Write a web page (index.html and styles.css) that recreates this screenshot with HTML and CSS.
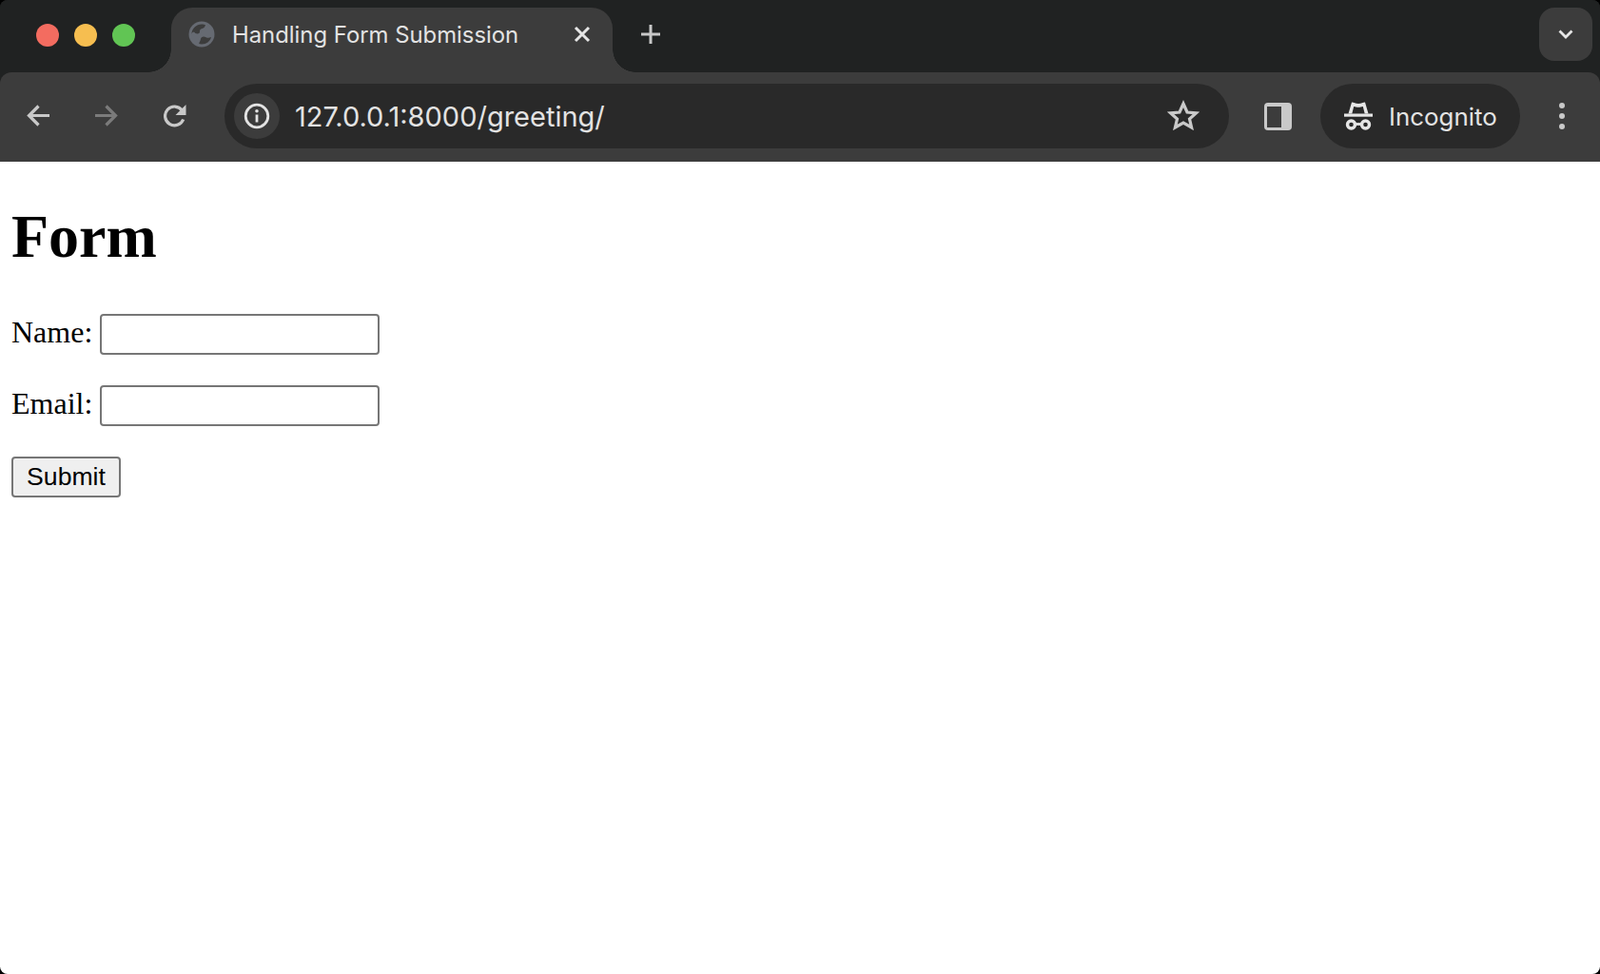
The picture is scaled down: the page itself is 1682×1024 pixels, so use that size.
FILE: index.html
```html
<!DOCTYPE html>
<html lang="en">
<head>
<meta charset="utf-8">
<title>Handling Form Submission</title>
<link rel="stylesheet" href="styles.css">
</head>
<body>
<div class="window">
  <header class="tabstrip">
    <div class="lights">
      <span class="light red"></span>
      <span class="light yellow"></span>
      <span class="light green"></span>
    </div>
    <div class="tab">
      <svg class="globe" viewBox="0 0 28 28" aria-hidden="true">
        <circle cx="14" cy="14" r="13.5" fill="#666a72"/>
        <path d="M3.5 14C3.5 8 8.5 3.500 14 3.500c1.500 0 3 .3 4 .8-.5 2-1.500 3.200-3.500 3.700-1.800.4-2.500 1.500-2.500 3 0 1.800-1 2.500-2.500 2.500-1.500 0-2.800-1-3.500-2-.8 0-2.500.8-2.500 2.500zM14 24.500c-1 0-2-.2-2.800-.5.3-2 1.600-3.200 1.800-5 .2-1.500 1.500-2.500 3.200-2.500 1.500 0 2.300 1 3.800 1.300 1 .2 3-.4 4-.8-1 4.500-5 7.500-10 7.500z" fill="#3c3c3c"/>
      </svg>
      <span class="tab-title">Handling Form Submission</span>
      <svg class="tab-close" viewBox="0 0 18 18" aria-hidden="true">
        <path d="M2 2l14 14M16 2L2 16" stroke="#e6e6e6" stroke-width="3" fill="none"/>
      </svg>
    </div>
    <svg class="new-tab" viewBox="0 0 22 22" aria-hidden="true">
      <path d="M11 1v20M1 11h20" stroke="#c8c8c8" stroke-width="3" fill="none"/>
    </svg>
    <div class="tab-search">
      <svg class="chevron" viewBox="0 0 16 10" aria-hidden="true">
        <path d="M1.500 1.500L8 8l6.500-6.500" stroke="#e6e6e6" stroke-width="2.800" fill="none"/>
      </svg>
    </div>
  </header>

  <nav class="toolbar">
    <svg class="nav-icon" viewBox="0 0 24 24" aria-hidden="true">
      <path d="M24 11.500H3M12.500 1.500L2.500 11.500l10 10" stroke="#c9c9c9" stroke-width="3.200" fill="none"/>
    </svg>
    <svg class="nav-icon" viewBox="0 0 24 24" aria-hidden="true">
      <path d="M0 11.500h21M11.500 1.500l10 10-10 10" stroke="#7b7b7b" stroke-width="3.200" fill="none"/>
    </svg>
    <svg class="nav-icon" viewBox="0 0 24 24" aria-hidden="true">
      <path d="M20.700 15.500a9.900 9.900 0 1 1-1.300-9.500" stroke="#c9c9c9" stroke-width="3.200" fill="none"/>
      <path d="M23.500 0v11h-11z" fill="#c9c9c9"/>
    </svg>
    <div class="omnibox">
      <span class="info">
        <svg class="info-icon" viewBox="0 0 28 28" aria-hidden="true">
          <circle cx="14" cy="14" r="11.800" stroke="#e3e3e3" stroke-width="2.800" fill="none"/>
          <path d="M14 12.500v8" stroke="#e3e3e3" stroke-width="2.800"/>
          <circle cx="14" cy="8.800" r="1.800" fill="#e3e3e3"/>
        </svg>
      </span>
      <span class="url">127.0.0.1:8000/greeting/</span>
      <svg class="star" viewBox="0 0 34 32" aria-hidden="true">
        <path d="M17 4l4 9 9.500.8-7 6.200 2.100 9-8.600-5-8.600 5 2.100-9-7-6.200L13 13z" stroke="#c9c9c9" stroke-width="3.200" stroke-linejoin="miter" fill="none"/>
      </svg>
    </div>
    <span class="side-panel"><span class="side-panel-left"></span></span>
    <div class="incognito">
      <svg class="hat" viewBox="0 0 30 30" aria-hidden="true">
        <path d="M0 12.500h30v3.200H0z" fill="#e6e6e6"/>
        <path d="M4.500 12.500L8 0.500c2.500 0 3.500 1.500 7 1.500s4.500-1.500 7-1.500l3.500 12h-3.800L19.800 5c-1.800.5-3 .8-4.800.8s-3-.3-4.800-.8L8.300 12.500z" fill="#e6e6e6"/>
        <circle cx="7.500" cy="24" r="4" stroke="#e6e6e6" stroke-width="3.400" fill="none"/>
        <circle cx="22.500" cy="24" r="4" stroke="#e6e6e6" stroke-width="3.400" fill="none"/>
        <path d="M11 23.500h8" stroke="#e6e6e6" stroke-width="2.800"/>
      </svg>
      <span class="incognito-label">Incognito</span>
    </div>
    <div class="menu">
      <span class="dot"></span>
      <span class="dot"></span>
      <span class="dot"></span>
    </div>
  </nav>

  <main class="page">
    <h1 class="heading">Form</h1>
    <form class="form">
      <p class="row"><label class="label" for="name">Name:</label> <input class="field" id="name" type="text"></p>
      <p class="row"><label class="label" for="email">Email:</label> <input class="field" id="email" type="email"></p>
      <p class="row"><input class="submit" type="submit" value="Submit"></p>
    </form>
  </main>
</div>
</body>
</html>
```

FILE: styles.css
```css
* {
  box-sizing: border-box;
}

html,
body {
  margin: 0;
  height: 100%;
  background: #000;
}

.window {
  height: 1024px;
  background: #202222;
  border-radius: 8px;
  overflow: hidden;
  display: flex;
  flex-direction: column;
}

/* Tab strip */
.tabstrip {
  flex: none;
  height: 76px;
  background: #202222;
  display: flex;
  align-items: flex-start;
}

.lights {
  display: flex;
  gap: 16px;
  margin: 25px 0 0 38px;
}

.light {
  width: 24px;
  height: 24px;
  border-radius: 50%;
}

.red { background: #f36c60; }
.yellow { background: #f6be50; }
.green { background: #61c554; }

.tab {
  position: relative;
  width: 464px;
  height: 68px;
  margin: 8px 0 0 38px;
  padding: 0 24px 12px 18px;
  background: #3c3c3c;
  border-radius: 22px 22px 0 0;
  display: flex;
  align-items: center;
}

.tab::before,
.tab::after {
  content: "";
  position: absolute;
  bottom: 0;
  width: 24px;
  height: 24px;
}

.tab::before {
  left: -24px;
  background: radial-gradient(circle at 0 0, #202222 23.500px, #3c3c3c 24px);
}

.tab::after {
  right: -24px;
  background: radial-gradient(circle at 100% 0, #202222 23.500px, #3c3c3c 24px);
}

.globe {
  flex: none;
  width: 28px;
  height: 28px;
}

.tab-title {
  flex: 1;
  margin-left: 18px;
  font: 400 23.850px "Inter", "Liberation Sans", sans-serif;
  color: #e3e3e3;
  white-space: nowrap;
}

.tab-close {
  flex: none;
  width: 18px;
  height: 18px;
  margin-right: -1px;
}

.new-tab {
  flex: none;
  width: 22px;
  height: 22px;
  margin: 25px 0 0 29px;
}

.tab-search {
  flex: none;
  width: 56px;
  height: 56px;
  margin: 8px 8px 0 auto;
  background: #3c3c3c;
  border-radius: 16px;
  display: flex;
  align-items: center;
  justify-content: center;
}

.chevron {
  width: 16px;
  height: 10px;
}

/* Toolbar */
.toolbar {
  flex: none;
  height: 94px;
  padding: 0 36px 2px 28px;
  background: #3c3c3c;
  border-radius: 12px 12px 0 0;
  display: flex;
  align-items: center;
}

.nav-icon {
  flex: none;
  width: 24px;
  height: 24px;
  margin-right: 48px;
}

.nav-icon:nth-of-type(3) {
  margin-right: 40px;
}

.omnibox {
  flex: 1;
  height: 68px;
  padding: 0 31px 0 10px;
  background: #292929;
  border-radius: 34px;
  display: flex;
  align-items: center;
}

.info {
  flex: none;
  width: 48px;
  height: 48px;
  background: #3c3c3c;
  border-radius: 50%;
  display: flex;
  align-items: center;
  justify-content: center;
}

.info-icon {
  width: 28px;
  height: 28px;
}

.url {
  flex: 1;
  margin-left: 16px;
  font: 400 29px "Inter", "Liberation Sans", sans-serif;
  color: #e3e3e3;
  white-space: nowrap;
}

.star {
  flex: none;
  width: 34px;
  height: 32px;
  margin-bottom: 2px;
}

.side-panel {
  flex: none;
  width: 29px;
  height: 29px;
  margin-left: 37px;
  background: #c9c9c9;
  border-radius: 4px;
  padding: 4px 11px 3px 3px;
  display: flex;
}

.side-panel-left {
  flex: 1;
  background: #3c3c3c;
}

.incognito {
  flex: none;
  width: 210px;
  height: 68px;
  margin-left: 30px;
  padding-left: 25px;
  background: #292929;
  border-radius: 34px;
  display: flex;
  align-items: center;
}

.hat {
  flex: none;
  width: 30px;
  height: 30px;
}

.incognito-label {
  margin-left: 17px;
  font: 400 25.900px "Inter", "Liberation Sans", sans-serif;
  color: #e3e3e3;
}

.menu {
  flex: none;
  width: 8px;
  margin-left: 40px;
  display: flex;
  flex-direction: column;
  align-items: center;
  gap: 5px;
}

.dot {
  width: 6px;
  height: 6px;
  border-radius: 50%;
  background: #c9c9c9;
}

/* Page content */
.page {
  flex: 1;
  padding: 0 12px;
  background: #fff;
  color: #000;
  font-family: "Liberation Serif", serif;
  font-size: 32px;
}

.heading {
  margin: 42px 0 44px;
  font-size: 64px;
  font-weight: 700;
}

.row {
  margin: 0 0 32px;
}

.field {
  width: 294px;
  height: 43px;
  padding: 2px 4px;
  background: #fff;
  border: 2px solid #767676;
  border-radius: 4px;
  font: 400 26.600px "Liberation Sans", sans-serif;
}

.submit {
  height: 43px;
  width: 115px;
  padding: 0;
  background: #efefef;
  border: 2px solid #767676;
  border-radius: 4px;
  color: #000;
  font: 400 26.600px "Liberation Sans", sans-serif;
}
```
